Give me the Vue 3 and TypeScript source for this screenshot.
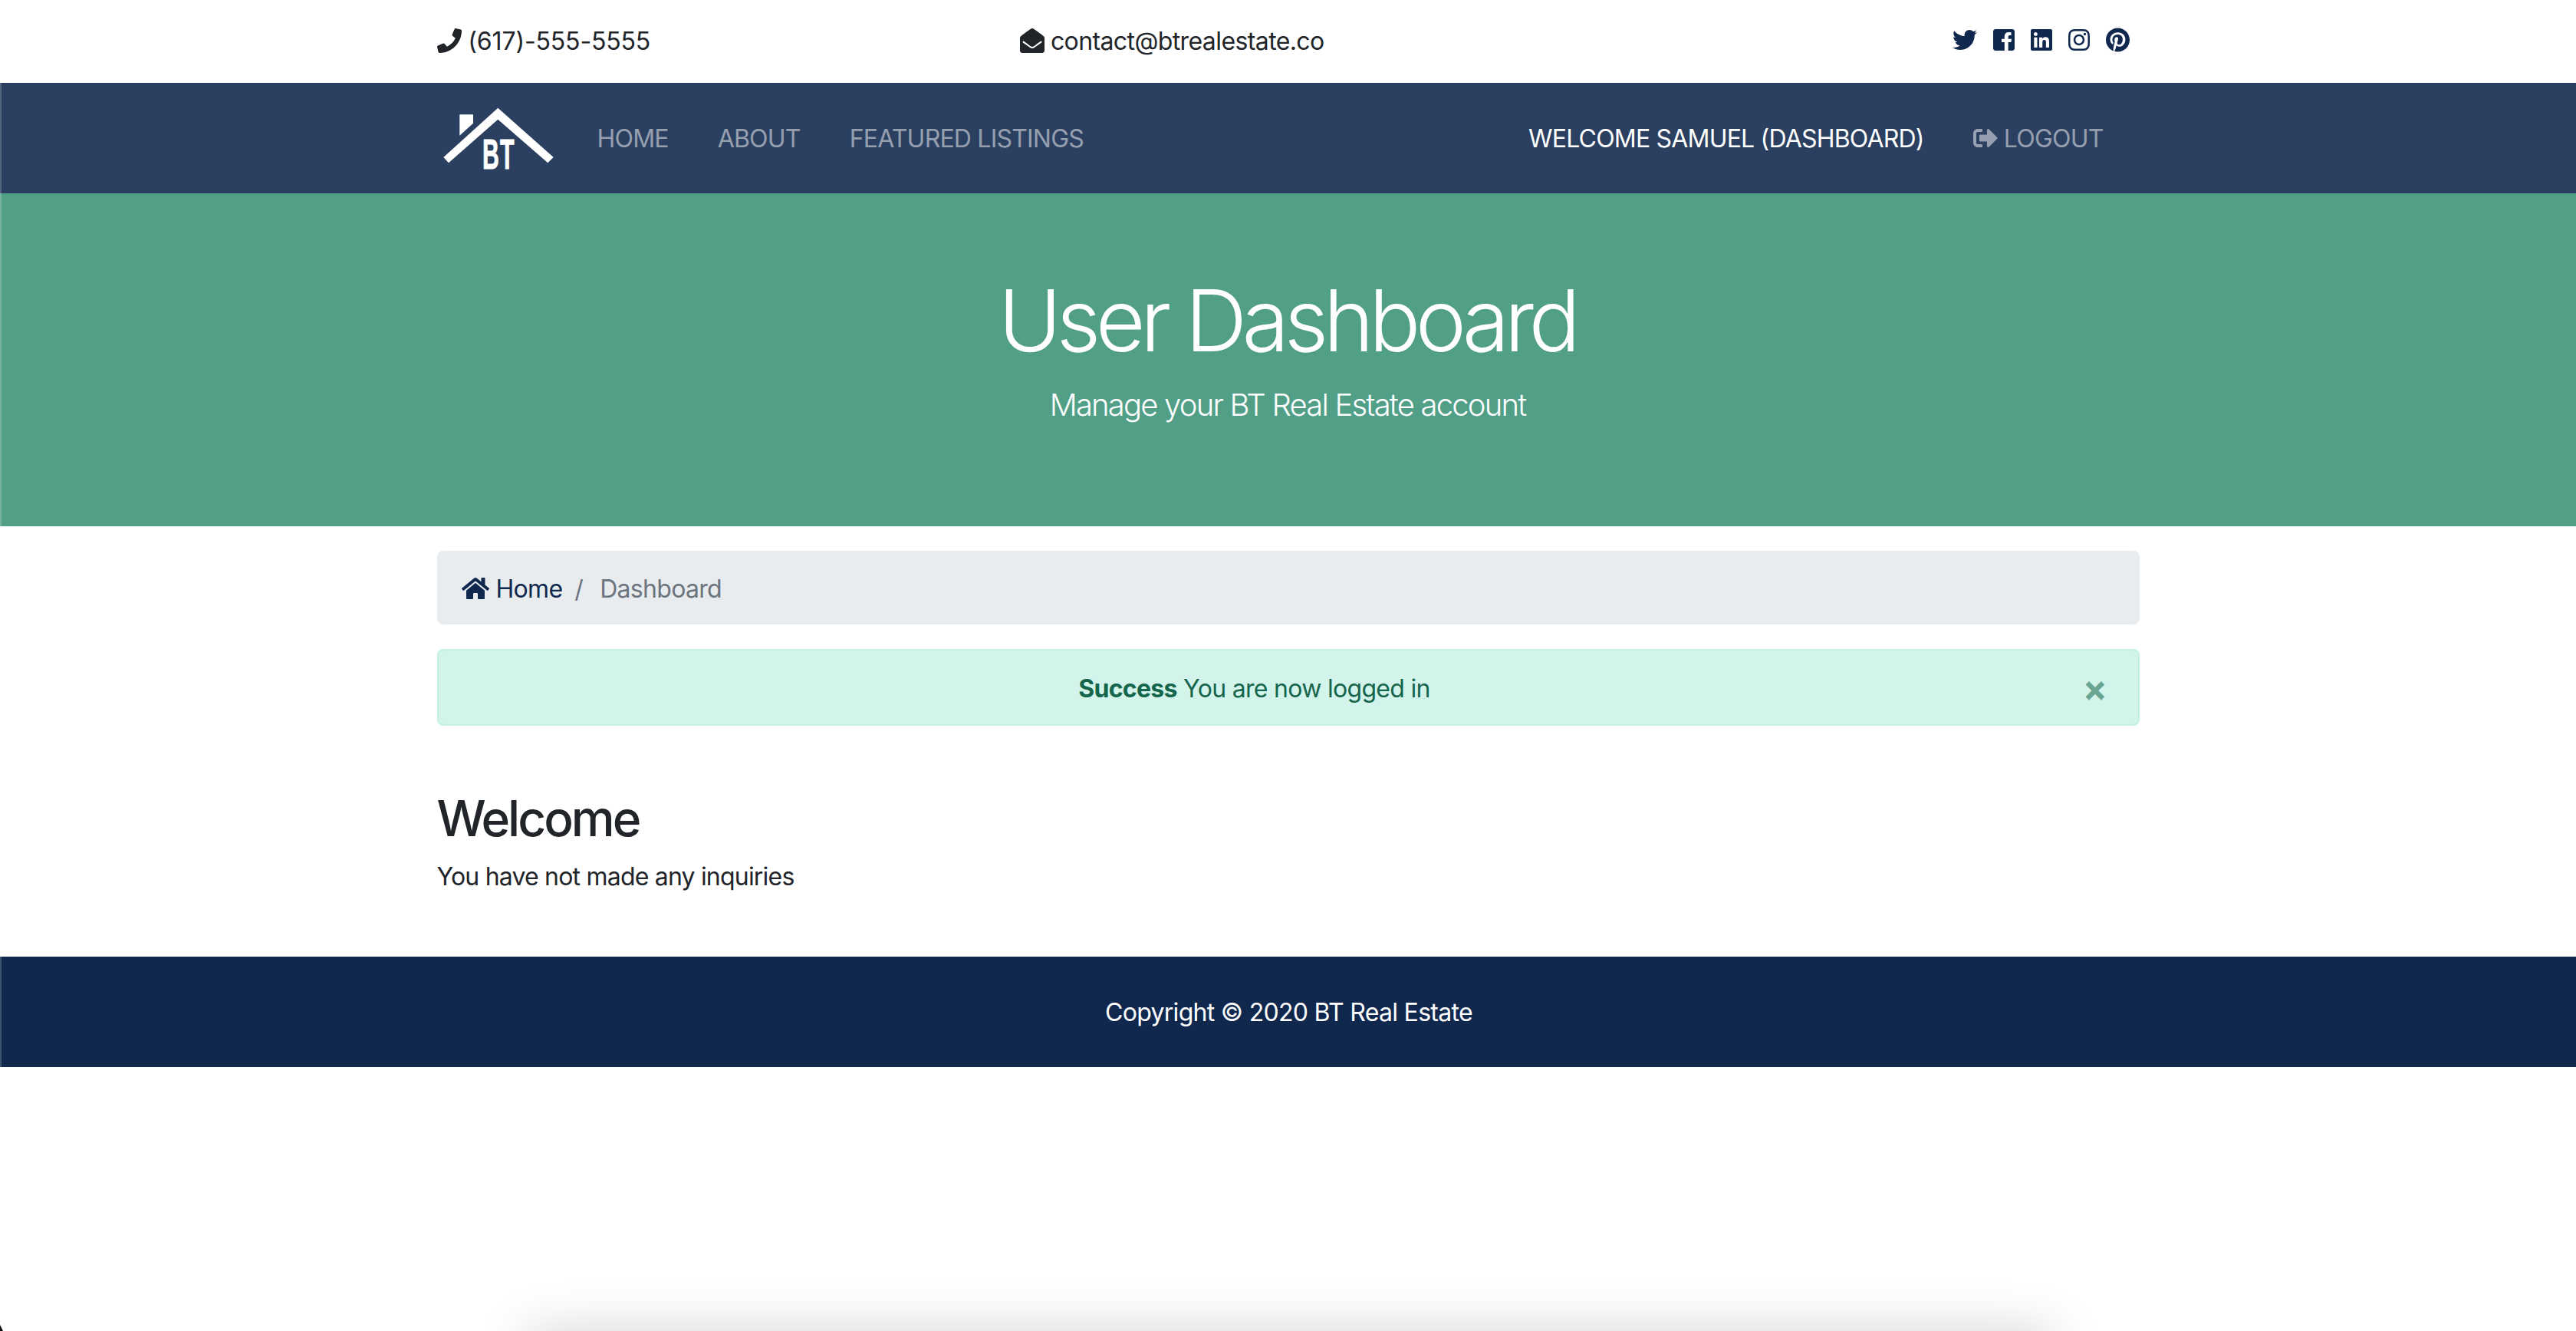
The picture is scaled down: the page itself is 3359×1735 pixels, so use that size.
<script setup lang="ts">
const navLinks: string[] = ['HOME', 'ABOUT', 'FEATURED LISTINGS']
</script>

<template>
  <div class="page">
    <section class="topbar">
      <div class="container top-grid">
        <div class="top-item phone">
          <svg class="fa" viewBox="0 0 512 512"><path d="M493.4 24.6l-104-24c-11.3-2.6-22.9 3.3-27.5 13.9l-48 112c-4.2 9.8-1.4 21.3 6.9 28l60.6 49.6c-36 76.7-98.9 140.5-177.2 177.2l-49.6-60.6c-6.8-8.3-18.2-11.1-28-6.9l-112 48C3.9 366.5-2 378.1.6 389.4l24 104C27.1 504.2 36.7 512 48 512c256.1 0 464-207.5 464-464 0-11.2-7.7-20.9-18.6-23.4z" /></svg>
          (617)-555-5555
        </div>
        <div class="top-item">
          <svg class="fa" viewBox="0 0 512 512"><path d="M512 464c0 26.51-21.49 48-48 48H48c-26.51 0-48-21.49-48-48V200.724a48 48 0 0 1 18.387-37.776c24.913-19.529 45.501-35.365 164.2-121.511C199.412 29.17 232.797-.347 256 .003c23.198-.354 56.596 29.172 73.413 41.433 118.687 86.137 139.303 101.995 164.2 121.512A48 48 0 0 1 512 200.724V464zm-65.666-196.605c-2.563-3.728-7.7-4.595-11.339-1.907-22.845 16.873-55.462 40.705-105.582 77.079-16.825 12.266-50.21 41.781-73.413 41.43-23.211.344-56.559-29.143-73.413-41.43-50.114-36.37-82.734-60.204-105.582-77.079-3.639-2.688-8.776-1.821-11.339 1.907l-9.072 13.196a7.998 7.998 0 0 0 1.839 10.967c22.887 16.899 55.454 40.69 105.303 76.868 20.274 14.781 56.524 47.813 92.264 47.573 35.724.242 71.961-32.771 92.263-47.573 49.85-36.179 82.418-59.97 105.303-76.868a7.998 7.998 0 0 0 1.839-10.967l-9.071-13.196z" /></svg>
          contact@btrealestate.co
        </div>
        <div class="socials">
          <svg class="brand" viewBox="0 0 512 512"><path d="M459.37 151.716c.325 4.548.325 9.097.325 13.645 0 138.72-105.583 298.558-298.558 298.558-59.452 0-114.68-17.219-161.137-47.106 8.447.974 16.568 1.299 25.34 1.299 49.055 0 94.213-16.568 130.274-44.832-46.132-.975-84.792-31.188-98.112-72.772 6.498.974 12.995 1.624 19.818 1.624 9.421 0 18.843-1.3 27.614-3.573-48.081-9.747-84.143-51.98-84.143-102.985v-1.299c13.969 7.797 30.214 12.67 47.431 13.319-28.264-18.843-46.781-51.005-46.781-87.391 0-19.492 5.197-37.36 14.294-52.954 51.655 63.675 129.3 105.258 216.365 109.807-1.624-7.797-2.599-15.918-2.599-24.04 0-57.828 46.782-104.934 104.934-104.934 30.213 0 57.502 12.67 76.67 33.137 23.715-4.548 46.456-13.32 66.599-25.34-7.798 24.366-24.366 44.833-46.132 57.827 21.117-2.273 41.584-8.122 60.426-16.243-14.292 20.791-32.161 39.308-52.628 54.253z" /></svg>
          <svg class="brand" viewBox="0 0 448 512"><path d="M448 80v352c0 26.5-21.5 48-48 48h-85.3V302.8h60.6l8.7-67.6h-69.3V192c0-19.6 5.4-32.9 33.5-32.9H376V98.7c-6.2-.8-27.4-2.7-52.2-2.7-51.6 0-87 31.5-87 89.4v49.9H176v67.6h60.9V480H48c-26.5 0-48-21.5-48-48V80c0-26.5 21.5-48 48-48h352c26.5 0 48 21.5 48 48z" /></svg>
          <svg class="brand" viewBox="0 0 448 512"><path d="M416 32H31.9C14.3 32 0 46.5 0 64.3v383.4C0 465.5 14.3 480 31.9 480H416c17.6 0 32-14.5 32-32.3V64.3c0-17.8-14.4-32.3-32-32.3zM135.4 416H69V202.2h66.5V416zm-33.2-243c-21.3 0-38.5-17.3-38.5-38.5S80.9 96 102.2 96c21.2 0 38.5 17.3 38.5 38.5 0 21.3-17.2 38.5-38.5 38.5zm282.1 243h-66.4V312c0-24.8-.5-56.7-34.5-56.7-34.6 0-39.9 27-39.9 54.9V416h-66.4V202.2h63.7v29.2h.9c8.9-16.8 30.6-34.5 62.9-34.5 67.2 0 79.7 44.3 79.7 101.9V416z" /></svg>
          <svg class="brand" viewBox="0 0 448 512"><path d="M224.1 141c-63.6 0-114.9 51.3-114.9 114.9s51.3 114.9 114.9 114.9S339 319.5 339 255.9 287.7 141 224.1 141zm0 189.6c-41.1 0-74.7-33.5-74.7-74.7s33.5-74.7 74.7-74.7 74.7 33.5 74.7 74.7-33.6 74.7-74.7 74.7zm146.4-194.3c0 14.9-12 26.8-26.8 26.8-14.9 0-26.8-12-26.8-26.8s12-26.8 26.8-26.8 26.8 12 26.8 26.8zm76.1 27.2c-1.7-35.9-9.9-67.7-36.2-93.9-26.2-26.2-58-34.4-93.9-36.2-37-2.1-147.9-2.1-184.9 0-35.8 1.7-67.6 9.9-93.9 36.1s-34.4 58-36.2 93.9c-2.1 37-2.1 147.9 0 184.9 1.7 35.9 9.9 67.7 36.2 93.9s58 34.4 93.9 36.2c37 2.1 147.9 2.1 184.9 0 35.9-1.7 67.7-9.9 93.9-36.2 26.2-26.2 34.4-58 36.2-93.9 2.1-37 2.1-147.8 0-184.8zM398.8 388c-7.8 19.6-22.9 34.7-42.6 42.6-29.5 11.7-99.5 9-132.1 9s-102.7 2.6-132.1-9c-19.6-7.8-34.7-22.9-42.6-42.6-11.7-29.5-9-99.5-9-132.1s-2.6-102.7 9-132.1c7.8-19.6 22.9-34.7 42.6-42.6 29.5-11.7 99.5-9 132.1-9s102.7-2.6 132.1 9c19.6 7.8 34.7 22.9 42.6 42.6 11.7 29.5 9 99.5 9 132.1s2.7 102.7-9 132.1z" /></svg>
          <svg class="brand" viewBox="0 0 496 512"><path d="M496 256c0 137-111 248-248 248-25.6 0-50.2-3.9-73.4-11.1 10.1-16.5 25.2-43.5 30.8-65 3-11.6 15.4-59 15.4-59 8.1 15.4 31.7 28.5 56.8 28.5 74.8 0 128.7-68.8 128.7-154.3 0-81.9-66.9-143.2-152.9-143.2-107 0-163.9 71.8-163.9 150.1 0 36.4 19.4 81.7 50.3 96.1 4.7 2.2 7.2 1.2 8.3-3.3.8-3.4 5-20.3 6.9-28.1.6-2.5.3-4.7-1.7-7.1-10.1-12.5-18.3-35.3-18.3-56.6 0-54.7 41.4-107.6 112-107.6 60.9 0 103.6 41.5 103.6 100.9 0 67.1-33.9 113.6-78 113.6-24.3 0-42.6-20.1-36.7-44.8 7-29.5 20.5-61.3 20.5-82.6 0-19-10.2-34.9-31.4-34.9-24.9 0-44.9 25.7-44.9 60.2 0 22 7.4 36.8 7.4 36.8s-24.5 103.8-29 123.2c-5 21.4-3 51.6-.9 71.2C65.4 450.9 0 361.1 0 256 0 119 111 8 248 8s248 111 248 248z" /></svg>
        </div>
      </div>
    </section>

    <nav class="navbar edge">
      <div class="container nav-row">
        <svg class="logo" viewBox="0 0 176 144">
          <polygon points="7.3,97 14,104.3 78.3,47.7 143.3,104.3 150.7,97 78.3,32.7" fill="#fff" />
          <polygon points="28.3,41.3 46,41.3 46,52.7 28.3,68.7" fill="#fff" />
          <text class="logo-text" transform="translate(58 112) scale(0.55 1)" x="0" y="0">BT</text>
        </svg>
        <ul class="links">
          <li v-for="link in navLinks" :key="link">{{ link }}</li>
        </ul>
        <ul class="links right">
          <li class="active">WELCOME SAMUEL (DASHBOARD)</li>
          <li>
            <svg class="fa" viewBox="0 0 512 512"><path d="M497 273L329 441c-15 15-41 4.5-41-17v-96H152c-13.3 0-24-10.7-24-24v-96c0-13.3 10.7-24 24-24h136V88c0-21.4 25.9-32 41-17l168 168c9.3 9.4 9.3 24.6 0 34zM192 436v-40c0-6.6-5.4-12-12-12H96c-17.7 0-32-14.3-32-32V160c0-17.7 14.3-32 32-32h84c6.6 0 12-5.4 12-12V76c0-6.6-5.4-12-12-12H96c-53 0-96 43-96 96v192c0 53 43 96 96 96h84c6.6 0 12-5.4 12-12z" /></svg>
            LOGOUT
          </li>
        </ul>
      </div>
    </nav>

    <section class="showcase edge">
      <h1>User Dashboard</h1>
      <p>Manage your BT Real Estate account</p>
    </section>

    <div class="container body">
      <div class="crumb">
        <svg class="home" viewBox="0 0 576 512"><path d="M280.37 148.26L96 300.11V464a16 16 0 0 0 16 16l112.06-.29a16 16 0 0 0 15.92-16V368a16 16 0 0 1 16-16h64a16 16 0 0 1 16 16v95.64a16 16 0 0 0 16 16.05L464 480a16 16 0 0 0 16-16V300L295.67 148.26a12.19 12.19 0 0 0-15.3 0zM571.6 251.47L488 182.56V44.05a12 12 0 0 0-12-12h-56a12 12 0 0 0-12 12v72.61L318.47 43a48 48 0 0 0-61 0L4.34 251.47a12 12 0 0 0-1.6 16.9l25.5 31A12 12 0 0 0 45.15 301l235.22-193.74a12.19 12.19 0 0 1 15.3 0L530.9 301a12 12 0 0 0 16.9-1.6l25.5-31a12 12 0 0 0-1.7-16.93z" /></svg>
        <span class="crumb-link">Home</span>
        <span class="crumb-sep">/</span>
        <span class="crumb-current">Dashboard</span>
      </div>
      <div class="alert">
        <strong>Success</strong> You are now logged in
        <span class="close">×</span>
      </div>
      <h2>Welcome</h2>
      <p class="note">You have not made any inquiries</p>
    </div>

    <footer class="footer edge">Copyright © 2020 BT Real Estate</footer>
    <div class="peek"></div>
    <div class="corner"></div>
  </div>
</template>

<style>
html, body {
  margin: 0;
  background: #fff;
}
</style>

<style scoped>
.page {
  font-family: Inter, "Liberation Sans", sans-serif;
  font-size: 32px;
  line-height: 48px;
  color: #212529;
  letter-spacing: -0.7px;
}
.container {
  width: 2220px;
  margin: 0 auto;
}
.fa {
  width: 32px;
  height: 32px;
  fill: currentColor;
  vertical-align: -4px;
}
.topbar {
  height: 108px;
  padding-top: 30px;
  box-sizing: border-box;
}
.top-grid {
  display: grid;
  grid-template-columns: 700px 700px 700px;
  column-gap: 60px;
}
.top-item {
  white-space: nowrap;
  letter-spacing: -0.6px;
}
.phone {
  letter-spacing: -0.15px;
}
.socials {
  display: flex;
  justify-content: flex-end;
  align-items: center;
  gap: 21px;
  padding-right: 13px;
  height: 44px;
}
.brand {
  height: 32px;
  fill: #10284e;
}
.brand:nth-child(1) { width: 32px; }
.brand:nth-child(2), .brand:nth-child(3), .brand:nth-child(4) { width: 28px; }
.brand:nth-child(5) { width: 31px; }
.edge {
  border-left: 2px solid rgba(255, 255, 255, 0.2);
}
.navbar {
  height: 144px;
  background: #2b3f60;
  box-sizing: border-box;
}
.nav-row {
  display: flex;
  align-items: center;
  height: 144px;
}
.logo {
  width: 176px;
  height: 144px;
  flex: none;
}
.logo-text {
  font-family: "Liberation Sans", sans-serif;
  font-weight: 700;
  font-size: 55px;
  letter-spacing: 2px;
  fill: #fff;
  stroke: #fff;
  stroke-width: 1px;
}
.links {
  list-style: none;
  display: flex;
  gap: 64px;
  margin: 0;
  padding: 2px 32px 0;
  color: rgba(255, 255, 255, 0.5);
  white-space: nowrap;
}
.links li {
  letter-spacing: -0.8px;
}
.right {
  margin-left: auto;
  padding-right: 48px;
}
.active {
  color: #fff;
}
.showcase {
  height: 434px;
  background: #529f88;
  color: #fff;
  text-align: center;
  box-sizing: border-box;
  padding-top: 98px;
}
.showcase h1 {
  margin: 0;
  padding-right: 5px;
  font-size: 112px;
  line-height: 134px;
  font-weight: 300;
  letter-spacing: -6.6px;
}
.showcase p {
  margin: 14px 0 0;
  padding-right: 3px;
  font-size: 40px;
  line-height: 60px;
  font-weight: 300;
  letter-spacing: -1.8px;
}
.body {
  padding-top: 32px;
  padding-bottom: 80px;
}
.crumb {
  height: 96px;
  box-sizing: border-box;
  padding: 26px 32px 22px;
  background: #e9ecef;
  border-radius: 8px;
  margin-bottom: 32px;
  white-space: nowrap;
}
.home {
  width: 36px;
  height: 32px;
  fill: #10284e;
  vertical-align: -4px;
  margin-right: 9px;
}
.crumb-link {
  color: #10284e;
}
.crumb-sep {
  color: #6c757d;
  padding: 0 22px 0 16px;
}
.crumb-current {
  color: #6c757d;
}
.alert {
  position: relative;
  box-sizing: border-box;
  height: 100px;
  padding: 26px 128px 22px 40px;
  text-align: center;
  background: #d3f4eb;
  border: 2px solid #c3f0e1;
  border-radius: 8px;
  color: #15654d;
  margin-bottom: 82px;
}
.close {
  position: absolute;
  top: 25px;
  right: 40px;
  font-size: 48px;
  line-height: 48px;
  font-weight: 700;
  color: #15654d;
  opacity: 0.55;
}
h2 {
  margin: 0 0 14px;
  font-size: 64px;
  line-height: 77px;
  font-weight: 500;
  letter-spacing: -3px;
}
.note {
  margin: 0;
  letter-spacing: -0.8px;
}
.footer {
  height: 144px;
  box-sizing: border-box;
  background: #10284e;
  color: #fff;
  text-align: center;
  line-height: 146px;
}
.peek {
  position: fixed;
  left: 690px;
  top: 1745px;
  width: 1985px;
  height: 60px;
  box-shadow: 0 -6px 70px rgba(0, 0, 0, 0.2);
}
.corner {
  position: fixed;
  left: 0;
  top: 1727px;
  width: 4px;
  height: 8px;
  background: #111;
  clip-path: polygon(0 0, 100% 100%, 0 100%);
}
</style>
